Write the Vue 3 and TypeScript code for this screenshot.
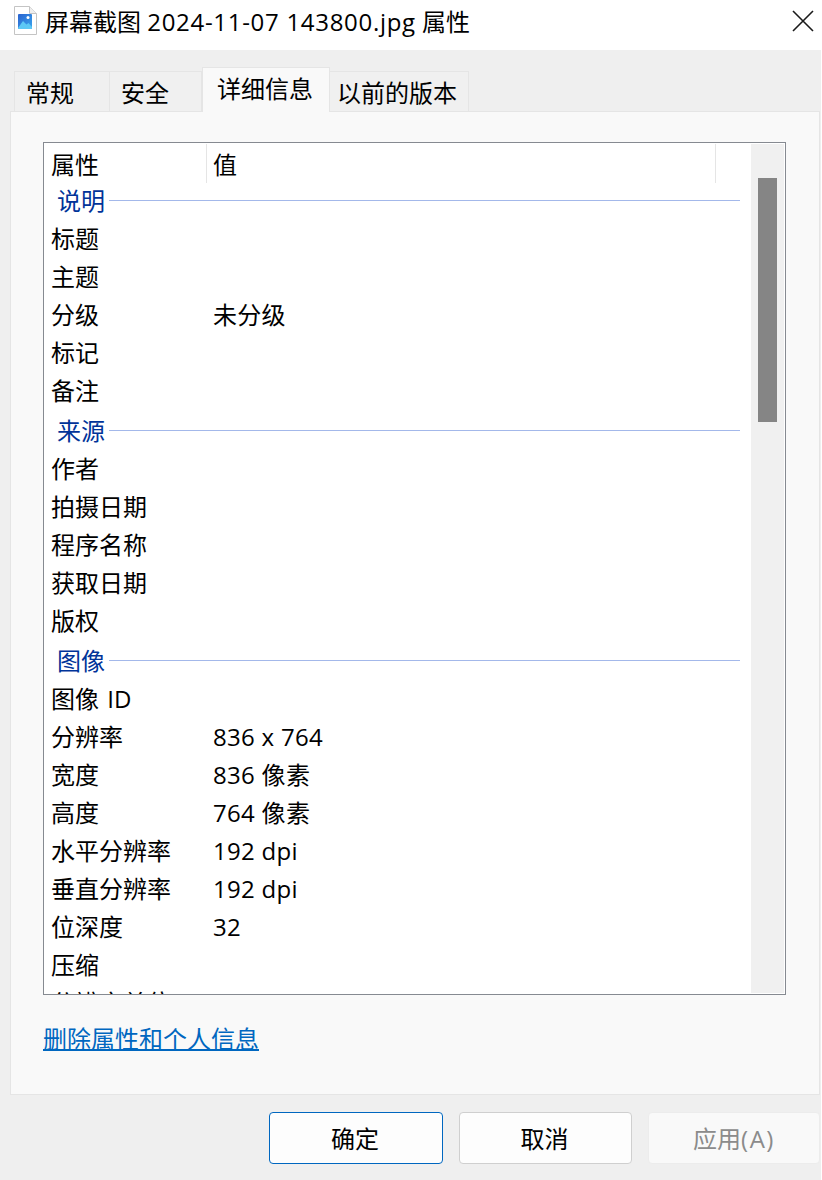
<script setup lang="ts">
interface Row { k: string; v?: string }
interface Group { name: string; rows: Row[] }
const groups: Group[] = [
  { name: '说明', rows: [{ k: '标题' }, { k: '主题' }, { k: '分级', v: '未分级' }, { k: '标记' }, { k: '备注' }] },
  { name: '来源', rows: [{ k: '作者' }, { k: '拍摄日期' }, { k: '程序名称' }, { k: '获取日期' }, { k: '版权' }] },
  {
    name: '图像',
    rows: [
      { k: '图像 ID' },
      { k: '分辨率', v: '836 x 764' },
      { k: '宽度', v: '836 像素' },
      { k: '高度', v: '764 像素' },
      { k: '水平分辨率', v: '192 dpi' },
      { k: '垂直分辨率', v: '192 dpi' },
      { k: '位深度', v: '32' },
      { k: '压缩' },
      { k: '分辨率单位' },
    ],
  },
]
const tabs = ['常规', '安全', '详细信息', '以前的版本']
</script>

<template>
  <div class="win">
    <header class="title">
      <svg class="file" width="24" height="30" viewBox="0 0 24 30">
        <path d="M.5.5h15l7 7v21H.5z" fill="#fff" stroke="#c4c4c4" stroke-width="1" />
        <path d="M15.500.5v7h7" fill="#eee" stroke="#c4c4c4" stroke-width="1" />
        <defs>
          <linearGradient id="pic" x1="0" y1="0" x2="1" y2="1">
            <stop offset="0" stop-color="#2a62cf" />
            <stop offset="1" stop-color="#3aa6ee" />
          </linearGradient>
        </defs>
        <rect x="4" y="8" width="14" height="15" rx="1" fill="url(#pic)" />
        <path d="M4 22l5-7 3.500 3.500L14.500 17l3.500 4v1a1 1 0 0 1-1 1H5a1 1 0 0 1-1-1z" fill="#5cc8f5" />
        <circle cx="14" cy="11.500" r="1.500" fill="#fff" />
      </svg>
      <span class="title-text">屏幕截图 <span class="title-latin">2024-11-07 143800.jpg</span> 属性</span>
      <svg class="close" width="22" height="22" viewBox="0 0 22 22">
        <path d="M1 1l20 20M21 1L1 21" stroke="#1a1a1a" stroke-width="1.600" fill="none" />
      </svg>
    </header>

    <div class="body">
      <nav class="tabs">
        <div
          v-for="(t, i) in tabs"
          :key="t"
          class="tab"
          :class="['tab-' + i, { active: i === 2 }]"
        >{{ t }}</div>
      </nav>

      <section class="panel">
        <div class="list">
          <div class="content">
            <div class="head">
              <div class="hcell c1">属性</div>
              <div class="hcell c2">值</div>
            </div>
            <template v-for="g in groups" :key="g.name">
              <div class="group">
                <span class="gname">{{ g.name }}</span>
                <span class="gline"></span>
              </div>
              <div v-for="r in g.rows" :key="r.k" class="row">
                <div class="c1">{{ r.k }}</div>
                <div class="c2">{{ r.v }}</div>
              </div>
            </template>
          </div>
          <div class="scroll"><div class="thumb"></div></div>
        </div>
        <a class="link">删除属性和个人信息</a>
      </section>

      <footer class="buttons">
        <button class="btn primary">确定</button>
        <button class="btn">取消</button>
        <button class="btn disabled">应用<span class="acc">(A)</span></button>
      </footer>
    </div>
  </div>
</template>

<style>
html, body { margin: 0; background: #fff; }
</style>

<style scoped>
.win {
  width: 821px;
  height: 1180px;
  overflow: hidden;
  display: flex;
  flex-direction: column;
  font-family: "Open Sans", "Noto Sans CJK SC", sans-serif;
  font-size: 24px;
  color: #000;
}
.title {
  height: 50px;
  flex: none;
  background: #fff;
  display: flex;
  align-items: center;
  padding: 0 6px 0 14px;
  box-sizing: border-box;
}
.file { flex: none; margin-top: -8px; }
.title-text { margin-left: 7px; line-height: 46px; margin-top: -6px; white-space: nowrap; }
.title-latin { letter-spacing: 0.7px; }
.close { margin-left: auto; margin-top: -9px; flex: none; margin-right: 1px; }
.body {
  flex: 1;
  background: #efefef;
  display: flex;
  flex-direction: column;
  padding-top: 17px;
}
.tabs {
  height: 45px;
  display: flex;
  align-items: flex-end;
  padding-left: 14px;
  position: relative;
  z-index: 1;
}
.tab {
  box-sizing: border-box;
  height: 41px;
  background: #f0f0f0;
  border: 1px solid #e5e5e5;
  line-height: 41px;
  padding-left: 11px;
  white-space: nowrap;
}
.tab-0 { width: 96px; }
.tab-1 { width: 92px; border-left: none; }
.tab-2 {
  width: 128px;
  height: 45px;
  line-height: 41px;
  padding-left: 14px;
  background: #f9f9f9;
  border-bottom: none;
}
.tab-3 { width: 139px; border-left: none; padding-left: 7px; }
.panel {
  box-sizing: border-box;
  margin: -1px 0 0 10px;
  width: 810px;
  height: 984px;
  flex: none;
  background: #f9f9f9;
  border: 1px solid #e5e5e5;
  padding: 30px 33px 0 32px;
}
.list {
  box-sizing: border-box;
  height: 853px;
  width: 743px;
  border: 1px solid #868a91;
  background: #fff;
  display: flex;
  overflow: hidden;
}
.content { flex: 1; min-width: 0; overflow: hidden; }
.head { height: 40px; display: flex; align-items: center; padding-top: 1px; box-sizing: border-box; }
.hcell { height: 39px; line-height: 42px; box-sizing: border-box; }
.hcell.c1 { border-right: 1px solid #e5e5e5; }
.hcell.c2 { width: 509px; border-right: 1px solid #e5e5e5; flex: none; }
.c1 { width: 163px; padding-left: 7px; box-sizing: border-box; flex: none; white-space: nowrap; word-spacing: 2px; }
.c2 { padding-left: 6px; white-space: nowrap; letter-spacing: 0.3px; }
.group { height: 40px; display: flex; align-items: center; padding-left: 13px; color: #003399; }
.gname { line-height: 36px; margin-top: -4px; }
.gline { flex: 1; height: 1px; background: #a3b8ea; margin: -5px 11px 0 4px; }
.row { height: 38px; display: flex; line-height: 32px; }
.scroll {
  width: 33px;
  flex: none;
  background: #f0f0f0;
  padding: 34px 0 0 7px;
  box-sizing: border-box;
  margin: 1px 1px 1px 0;
}
.thumb { width: 19px; height: 244px; background: #858585; }
.link {
  display: block;
  margin-top: 26px;
  width: fit-content;
  line-height: 36px;
  color: #0067c0;
  text-decoration: underline;
  text-decoration-thickness: 2px;
  cursor: pointer;
}
.buttons {
  display: flex;
  padding: 17px 0 0 269px;
  gap: 16px;
}
.btn {
  box-sizing: border-box;
  width: 173px;
  height: 52px;
  border-radius: 4px;
  border: 1px solid #cfcfcf;
  background: #fdfdfd;
  font: inherit;
  color: #000;
  padding: 0 2px 2px 0;
}
.primary { width: 174px; border-color: #0067c0; }
.disabled { width: 172px; background: #f9f9f9; border-color: #ececec; color: #8b8b8b; padding-right: 0; }
.acc { letter-spacing: 1.5px; }
</style>
